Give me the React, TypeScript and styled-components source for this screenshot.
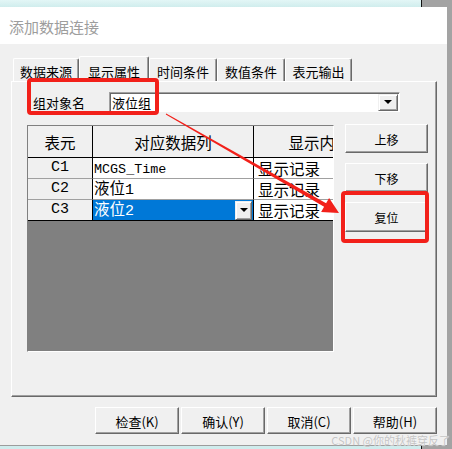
import React from 'react';
import styled, { createGlobalStyle } from 'styled-components';

const CJK = `"Noto Sans CJK SC", "Noto Sans", sans-serif`;
const MONO = `"Liberation Mono", "DejaVu Sans Mono", monospace`;

const GlobalStyle = createGlobalStyle`
    html, body {
        margin: 0;
        padding: 0;
    }
    body {
        width: 452px;
        height: 449px;
        overflow: hidden;
        font-family: ${CJK};
        background: #cfeced;
    }
    * {
        box-sizing: border-box;
    }
`;

const Desktop = styled.div`
    position: relative;
    width: 452px;
    height: 449px;
    overflow: hidden;
    background: linear-gradient(180deg, #e3f6f6 0px, #d0eded 7px, #cfeced 100%);
`;

/* the window sitting behind the dialog, only its left strip shows */
const BehindWindow = styled.div`
    position: absolute;
    left: 421px;
    top: 0;
    width: 31px;
    height: 449px;
    background: #a3a3a3;
    border-left: 1px solid #111;
`;

const Dialog = styled.div`
    position: relative;
    z-index: 1;
    margin-top: 7px;
    width: 447px;
    height: 439px;
    display: flex;
    flex-direction: column;
    border-bottom: 1px solid #9c9c9c;
`;

const TitleBar = styled.div`
    height: 37px;
    flex: none;
    display: flex;
    align-items: center;
    padding: 2px 0 0 9px;
    background: #fff;
    color: #9d9d9d;
    font-size: 15px;
`;

const Body = styled.div`
    flex: 1;
    background: #f0f0f0;
    padding: 12px 10px 0 11px;
    display: flex;
    flex-direction: column;
`;

const TabStrip = styled.div`
    height: 25px;
    display: flex;
    align-items: flex-end;
    padding-left: 2px;
`;

const Tab = styled.div<{ $width: number; $active?: boolean }>`
    position: relative;
    z-index: ${({ $active }) => ($active ? 2 : 1)};
    width: ${({ $width }) => $width}px;
    height: ${({ $active }) => ($active ? 26 : 23)}px;
    margin-bottom: ${({ $active }) => ($active ? -1 : 0)}px;
    display: flex;
    align-items: center;
    justify-content: center;
    padding-top: 3px;
    background: #f0f0f0;
    border-top: 1px solid #fff;
    border-left: 1px solid #fff;
    border-right: 1px solid #696969;
    border-top-left-radius: 2px;
    border-top-right-radius: 2px;
    box-shadow: inset -1px 0 #a0a0a0;
    font-size: 13px;
    color: #000;
`;

const TabPanel = styled.div`
    height: 316px;
    width: 426px;
    padding: 10px 0 0 15px;
    background: #f0f0f0;
    border-top: 1px solid #fff;
    border-left: 1px solid #fff;
    border-right: 1px solid #696969;
    border-bottom: 1px solid #696969;
    box-shadow: inset -1px -1px #a0a0a0;
`;

const FieldRow = styled.div`
    display: flex;
    align-items: center;
    height: 20px;
`;

const FieldLabel = styled.div`
    margin-left: 6px;
    width: 76px;
    font-size: 13px;
    padding-top: 1px;
`;

const Combo = styled.div`
    width: 291px;
    height: 20px;
    display: flex;
    align-items: center;
    background: #fff;
    border: 1px solid;
    border-color: #a0a0a0 #fff #fff #a0a0a0;
    box-shadow: inset 1px 1px #696969;
`;

const ComboText = styled.div`
    flex: 1;
    padding-left: 2px;
    font-size: 13px;
`;

const DropButton = styled.div<{ $w: number; $h: number }>`
    width: ${({ $w }) => $w}px;
    height: ${({ $h }) => $h}px;
    flex: none;
    display: flex;
    align-items: center;
    justify-content: center;
    background: #f0f0f0;
    border: 1px solid;
    border-color: #f0f0f0 #696969 #696969 #f0f0f0;
    box-shadow: inset 1px 1px #fff, inset -1px -1px #a0a0a0;
    margin-right: 1px;
`;

const Caret = styled.div`
    width: 0;
    height: 0;
    border-left: 4px solid transparent;
    border-right: 4px solid transparent;
    border-top: 4px solid #000;
`;

const ContentRow = styled.div`
    margin-top: 12px;
    display: flex;
    align-items: flex-start;
    gap: 11px;
`;

const Grid = styled.div`
    margin-top: 1px;
    width: 307px;
    height: 227px;
    overflow: hidden;
    background: #808080;
    border-top: 1px solid #808080;
    border-left: 1px solid #808080;
    border-right: 1px solid #fff;
    border-bottom: 1px solid #fff;
`;

const GridRow = styled.div<{ $height: number }>`
    display: flex;
    height: ${({ $height }) => $height}px;
    width: max-content;
`;

const Cell = styled.div<{
    $width: number;
    $fixed?: boolean;
    $align?: 'left' | 'center';
    $pad?: number;
    $line?: string;
    $selected?: boolean;
}>`
    width: ${({ $width }) => $width}px;
    flex: none;
    display: flex;
    align-items: center;
    justify-content: ${({ $align }) => ($align === 'center' ? 'center' : 'flex-start')};
    padding-left: ${({ $pad }) => $pad ?? 0}px;
    background: ${({ $fixed, $selected }) => ($selected ? '#0078d7' : $fixed ? '#f0f0f0' : '#fff')};
    color: ${({ $selected }) => ($selected ? '#fff' : '#000')};
    border-right: 1px solid #000;
    border-bottom: 1px solid ${({ $line }) => $line ?? '#a0a0a0'};
    font-size: 15.5px;
    line-height: 16px;
    white-space: nowrap;
`;

const Latin = styled.span<{ $size?: number }>`
    font-family: ${MONO};
    font-size: ${({ $size }) => $size ?? 13.4}px;
`;

const CellText = styled.span`
    flex: 1;
`;

const SideButtons = styled.div`
    display: flex;
    flex-direction: column;
    gap: 10px;
    width: 83px;
`;

const Button = styled.div<{ $width: number; $height: number; $size: number }>`
    width: ${({ $width }) => $width}px;
    height: ${({ $height }) => $height}px;
    display: flex;
    align-items: center;
    justify-content: center;
    padding-top: 1px;
    background: #f0f0f0;
    border: 1px solid;
    border-color: #fff #696969 #696969 #fff;
    box-shadow: inset -1px -1px #a0a0a0;
    font-size: ${({ $size }) => $size}px;
    color: #000;
`;

const Footer = styled.div`
    margin-top: 10px;
    display: flex;
    justify-content: flex-end;
    gap: 2px;
`;

const RedFrame = styled.div<{ $x: number; $y: number; $w: number; $h: number }>`
    position: absolute;
    z-index: 3;
    left: ${({ $x }) => $x}px;
    top: ${({ $y }) => $y}px;
    width: ${({ $w }) => $w}px;
    height: ${({ $h }) => $h}px;
    border: 4px solid #f2201a;
    border-radius: 4px;
    pointer-events: none;
`;

const ArrowLayer = styled.svg`
    position: absolute;
    z-index: 3;
    left: 0;
    top: 0;
    pointer-events: none;
`;

const Watermark = styled.div`
    position: absolute;
    z-index: 4;
    right: 2px;
    top: 434px;
    font-size: 11px;
    line-height: 13px;
    color: #c4c4c4;
    text-shadow: 0 0 1px #fff;
    white-space: nowrap;
`;

const TABS = [
    { label: '数据来源', width: 66 },
    { label: '显示属性', width: 70, active: true },
    { label: '时间条件', width: 68 },
    { label: '数值条件', width: 68 },
    { label: '表元输出', width: 67 },
];

const COLS = [65, 161, 132];

const ROWS = [
    { id: 'C1', value: <Latin>MCGS_Time</Latin> },
    { id: 'C2', value: <>液位<Latin $size={15}>1</Latin></> },
    { id: 'C3', value: <>液位<Latin $size={15}>2</Latin></>, selected: true },
];

const FOOTER_BUTTONS = ['检查(K)', '确认(Y)', '取消(C)', '帮助(H)'];

export default function App() {
    return (
        <>
            <GlobalStyle />
            <Desktop>
                <BehindWindow />
                <Dialog>
                    <TitleBar>添加数据连接</TitleBar>
                    <Body>
                        <TabStrip>
                            {TABS.map((t) => (
                                <Tab key={t.label} $width={t.width} $active={t.active}>
                                    {t.label}
                                </Tab>
                            ))}
                        </TabStrip>
                        <TabPanel>
                            <FieldRow>
                                <FieldLabel>组对象名</FieldLabel>
                                <Combo>
                                    <ComboText>液位组</ComboText>
                                    <DropButton $w={20} $h={17}>
                                        <Caret />
                                    </DropButton>
                                </Combo>
                            </FieldRow>
                            <ContentRow>
                                <Grid>
                                    <GridRow $height={32}>
                                        <Cell $width={COLS[0]} $fixed $align="center" $line="#000">
                                            表元
                                        </Cell>
                                        <Cell $width={COLS[1]} $fixed $align="center" $line="#000">
                                            对应数据列
                                        </Cell>
                                        <Cell $width={COLS[2]} $fixed $align="center" $line="#000">
                                            显示内容
                                        </Cell>
                                    </GridRow>
                                    {ROWS.map((r, i) => {
                                        const line = i === ROWS.length - 1 ? '#000' : undefined;
                                        return (
                                            <GridRow key={r.id} $height={21}>
                                                <Cell $width={COLS[0]} $fixed $align="center" $line={line}>
                                                    <Latin $size={15}>{r.id}</Latin>
                                                </Cell>
                                                <Cell $width={COLS[1]} $pad={1} $line={line} $selected={r.selected}>
                                                    <CellText>{r.value}</CellText>
                                                    {r.selected && (
                                                        <DropButton $w={17} $h={19}>
                                                            <Caret />
                                                        </DropButton>
                                                    )}
                                                </Cell>
                                                <Cell $width={COLS[2]} $pad={4} $line={line}>
                                                    显示记录
                                                </Cell>
                                            </GridRow>
                                        );
                                    })}
                                </Grid>
                                <SideButtons>
                                    <Button $width={83} $height={29} $size={12}>上移</Button>
                                    <Button $width={83} $height={29} $size={12}>下移</Button>
                                    <Button $width={83} $height={30} $size={12}>复位</Button>
                                </SideButtons>
                            </ContentRow>
                        </TabPanel>
                        <Footer>
                            {FOOTER_BUTTONS.map((b) => (
                                <Button key={b} $width={84} $height={27} $size={13}>
                                    {b}
                                </Button>
                            ))}
                        </Footer>
                    </Body>
                </Dialog>

                <RedFrame $x={27} $y={78} $w={132} $h={37} />
                <RedFrame $x={341} $y={191} $w={88} $h={52} />
                <ArrowLayer width={452} height={449} viewBox="0 0 452 449">
                    <polygon
                        fill="#f2201a"
                        points="166.2,113.6 326.1,203.3 329.1,198.1 339,213 321.1,211.9 324.1,206.7 165.8,114.4"
                    />
                </ArrowLayer>
                <Watermark>CSDN @你的秋裤穿反了</Watermark>
            </Desktop>
        </>
    );
}
